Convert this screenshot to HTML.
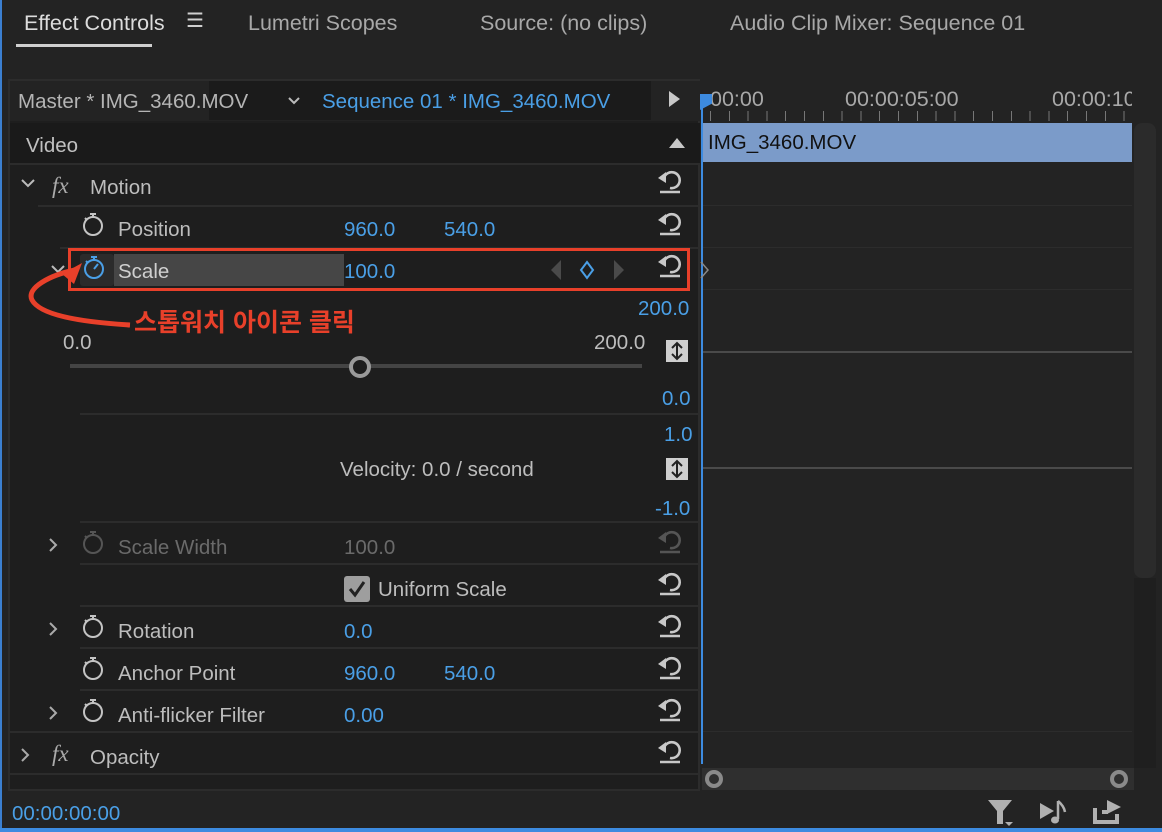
<!DOCTYPE html>
<html><head><meta charset="utf-8"><style>
*{margin:0;padding:0;box-sizing:border-box}
body{width:1162px;height:832px;background:#232323;font-family:"Liberation Sans","Noto Sans CJK KR",sans-serif;color:#bdbdbd;font-size:20.5px;position:relative;overflow:hidden}
.a{position:absolute;white-space:nowrap;line-height:1.15}
.b{color:#4a9fe6}
.ln{position:absolute;height:2px;background:#2c2c2c}
.rs{position:absolute;left:656px;width:28px;height:28px}
.sw{position:absolute;width:24px;height:26px}
.t{font-size:21.5px}
</style></head><body>
<div class="a" style="left:0;top:0;width:2px;height:832px;background:#3b7fd0"></div>
<div class="a" style="left:0;top:828px;width:1162px;height:4px;background:#3d8be0"></div>
<!-- tabs -->
<div class="a t" style="left:24px;top:11px;color:#dcdcdc">Effect Controls</div>
<div class="a" style="left:186px;top:10px;color:#cfcfcf;font-size:20px">☰</div>
<div class="a" style="left:16px;top:44px;width:136px;height:3px;background:#cfcfcf"></div>
<div class="a t" style="left:248px;top:11px;color:#a8a8a8">Lumetri Scopes</div>
<div class="a t" style="left:480px;top:11px;color:#a8a8a8">Source: (no clips)</div>
<div class="a t" style="left:730px;top:11px;color:#a8a8a8">Audio Clip Mixer: Sequence 01</div>
<!-- left panel -->
<div class="a" style="left:8px;top:79px;width:692px;height:712px;background:#1e1e1e;border:2px solid #2c2c2c"></div>
<div class="a" style="left:10px;top:81px;width:690px;height:40px;background:#232323"></div>
<div class="a" style="left:209px;top:81px;width:442px;height:39px;background:#1b1b1b"></div>
<div class="a" style="left:18px;top:90px;color:#b5b5b5">Master * IMG_3460.MOV</div>
<svg class="a" style="left:287px;top:96px" width="14" height="10"><path d="M2 2L7 7L12 2" fill="none" stroke="#bbb" stroke-width="2"/></svg>
<div class="a b" style="left:322px;top:90px">Sequence 01 * IMG_3460.MOV</div>
<svg class="a" style="left:668px;top:90px" width="14" height="18"><path d="M1 1L12 9L1 17Z" fill="#c8c8c8"/></svg>
<div class="a" style="left:10px;top:123px;width:690px;height:40px;background:#1a1a1a"></div>
<div class="a" style="left:26px;top:134px;color:#c0c0c0">Video</div>
<svg class="a" style="left:668px;top:137px" width="18" height="12"><path d="M1 11L9 1L17 11Z" fill="#c8c8c8"/></svg>
<div class="ln" style="left:10px;top:163px;width:690px"></div>
<div class="ln" style="left:38px;top:205px;width:662px"></div>
<div class="ln" style="left:60px;top:247px;width:640px"></div>
<div class="ln" style="left:80px;top:413px;width:620px"></div>
<div class="ln" style="left:80px;top:521px;width:620px"></div>
<div class="ln" style="left:80px;top:563px;width:620px"></div>
<div class="ln" style="left:80px;top:605px;width:620px"></div>
<div class="ln" style="left:80px;top:647px;width:620px"></div>
<div class="ln" style="left:80px;top:689px;width:620px"></div>
<div class="ln" style="left:10px;top:731px;width:690px"></div>
<div class="ln" style="left:10px;top:773px;width:690px"></div>
<!-- Motion -->
<svg class="a" style="left:20px;top:178px" width="16" height="12"><path d="M2 2L8 8L14 2" fill="none" stroke="#bbb" stroke-width="2"/></svg>
<div class="a" style="left:52px;top:173px;font-style:italic;font-size:23px;font-family:'Liberation Serif',serif;color:#aaa">fx</div>
<div class="a" style="left:90px;top:176px">Motion</div>
<svg width="0" height="0" style="position:absolute"><defs><g id="sw"><circle cx="11" cy="15" r="9" fill="none" stroke-width="2"/><path d="M8 3H14M11 3V6M3 7L5 9" fill="none" stroke-width="2"/></g>
<g id="rs"><path d="M8 11 A8 8 0 1 1 14 21" fill="none" stroke-width="2.6"/><path d="M2 11L10 5V16Z" stroke="none"/><path d="M4 25H24" stroke-width="2.4"/></g></defs></svg>
<svg class="sw" style="left:82px;top:211px" stroke="#c4c4c4"><use href="#sw"/></svg>
<div class="a" style="left:118px;top:218px">Position</div>
<div class="a b" style="left:344px;top:218px">960.0</div>
<div class="a b" style="left:444px;top:218px">540.0</div>
<!-- Scale row -->
<svg class="a" style="left:50px;top:264px" width="16" height="12"><path d="M2 2L8 8L14 2" fill="none" stroke="#bbb" stroke-width="2"/></svg>
<div class="a" style="left:80px;top:254px;width:34px;height:32px;background:#2b2b2b;border-radius:3px"></div>
<div class="a" style="left:114px;top:254px;width:230px;height:32px;background:#464646"></div>
<svg class="sw" style="left:83px;top:254px" stroke="#4a9fe6" fill="#4a9fe6"><use href="#sw"/><path d="M11 15L15 10" stroke-width="2"/></svg>
<div class="a" style="left:118px;top:260px;color:#cfcfcf">Scale</div>
<div class="a b" style="left:344px;top:260px">100.0</div>
<svg class="a" style="left:549px;top:259px" width="14" height="22"><path d="M12 1L2 11L12 21Z" fill="#4a4a4a"/></svg>
<svg class="a" style="left:579px;top:260px" width="16" height="20"><path d="M8 2L14 10L8 18L2 10Z" fill="none" stroke="#4a9fe6" stroke-width="2"/></svg>
<svg class="a" style="left:612px;top:259px" width="14" height="22"><path d="M2 1L12 11L2 21Z" fill="#4a4a4a"/></svg>
<div class="a" style="left:68px;top:248px;width:622px;height:43px;border:3px solid #e8402a"></div>
<svg class="a" style="left:20px;top:260px" width="120" height="80"><path d="M110 65 C60 62 20 55 12 40 C6 28 30 15 55 10" fill="none" stroke="#e8402a" stroke-width="5"/><path d="M62 3L42 14L54 24Z" fill="#e8402a"/></svg>
<div class="a" style="left:134px;top:309px;color:#e8402a;font-size:25px;font-weight:bold">스톱워치 아이콘 클릭</div>
<!-- graph -->
<div class="a b" style="left:638px;top:297px">200.0</div>
<div class="a" style="left:63px;top:331px;color:#bdbdbd">0.0</div>
<div class="a" style="left:594px;top:331px;color:#bdbdbd">200.0</div>
<div class="a" style="left:666px;top:340px;width:22px;height:22px;background:#cfcfcf"></div>
<svg class="a" style="left:666px;top:340px" width="22" height="22"><path d="M11 3V19M6 8L11 3L16 8M6 14L11 19L16 14" fill="none" stroke="#222" stroke-width="2"/></svg>
<div class="a" style="left:70px;top:364px;width:572px;height:4px;background:#444"></div>
<div class="a" style="left:349px;top:356px;width:22px;height:22px;border-radius:50%;border:4px solid #9a9a9a;background:#1e1e1e"></div>
<div class="a b" style="left:662px;top:387px">0.0</div>
<div class="a b" style="left:664px;top:423px">1.0</div>
<div class="a" style="left:340px;top:458px">Velocity: 0.0 / second</div>
<div class="a" style="left:666px;top:458px;width:22px;height:22px;background:#cfcfcf"></div>
<svg class="a" style="left:666px;top:458px" width="22" height="22"><path d="M11 3V19M6 8L11 3L16 8M6 14L11 19L16 14" fill="none" stroke="#222" stroke-width="2"/></svg>
<div class="a b" style="left:655px;top:497px">-1.0</div>
<!-- Scale width -->
<svg class="a" style="left:48px;top:537px" width="12" height="16"><path d="M2 2L8 8L2 14" fill="none" stroke="#aaa" stroke-width="2"/></svg>
<svg class="sw" style="left:82px;top:529px" stroke="#555"><use href="#sw"/></svg>
<div class="a" style="left:118px;top:536px;color:#6a6a6a">Scale Width</div>
<div class="a" style="left:344px;top:536px;color:#6a6a6a">100.0</div>
<div class="a" style="left:344px;top:576px;width:26px;height:26px;background:#9e9e9e;border-radius:3px"></div>
<svg class="a" style="left:346px;top:578px" width="22" height="22"><path d="M4 11L9 17L18 4" fill="none" stroke="#222" stroke-width="3"/></svg>
<div class="a" style="left:378px;top:578px">Uniform Scale</div>
<svg class="a" style="left:48px;top:621px" width="12" height="16"><path d="M2 2L8 8L2 14" fill="none" stroke="#aaa" stroke-width="2"/></svg>
<svg class="sw" style="left:82px;top:613px" stroke="#c4c4c4"><use href="#sw"/></svg>
<div class="a" style="left:118px;top:620px">Rotation</div>
<div class="a b" style="left:344px;top:620px">0.0</div>
<svg class="sw" style="left:82px;top:655px" stroke="#c4c4c4"><use href="#sw"/></svg>
<div class="a" style="left:118px;top:662px">Anchor Point</div>
<div class="a b" style="left:344px;top:662px">960.0</div>
<div class="a b" style="left:444px;top:662px">540.0</div>
<svg class="a" style="left:48px;top:705px" width="12" height="16"><path d="M2 2L8 8L2 14" fill="none" stroke="#aaa" stroke-width="2"/></svg>
<svg class="sw" style="left:82px;top:697px" stroke="#c4c4c4"><use href="#sw"/></svg>
<div class="a" style="left:118px;top:704px">Anti-flicker Filter</div>
<div class="a b" style="left:344px;top:704px">0.00</div>
<svg class="a" style="left:20px;top:747px" width="12" height="16"><path d="M2 2L8 8L2 14" fill="none" stroke="#aaa" stroke-width="2"/></svg>
<div class="a" style="left:52px;top:741px;font-style:italic;font-size:23px;font-family:'Liberation Serif',serif;color:#aaa">fx</div>
<div class="a" style="left:90px;top:746px">Opacity</div>
<svg class="rs" style="top:167px" fill="#c8c8c8" stroke="#c8c8c8"><use href="#rs"/></svg>
<svg class="rs" style="top:209px" fill="#c8c8c8" stroke="#c8c8c8"><use href="#rs"/></svg>
<svg class="rs" style="top:251px" fill="#c8c8c8" stroke="#c8c8c8"><use href="#rs"/></svg>
<svg class="rs" style="top:527px" fill="#555" stroke="#555"><use href="#rs"/></svg>
<svg class="rs" style="top:569px" fill="#c8c8c8" stroke="#c8c8c8"><use href="#rs"/></svg>
<svg class="rs" style="top:611px" fill="#c8c8c8" stroke="#c8c8c8"><use href="#rs"/></svg>
<svg class="rs" style="top:653px" fill="#c8c8c8" stroke="#c8c8c8"><use href="#rs"/></svg>
<svg class="rs" style="top:695px" fill="#c8c8c8" stroke="#c8c8c8"><use href="#rs"/></svg>
<svg class="rs" style="top:737px" fill="#c8c8c8" stroke="#c8c8c8"><use href="#rs"/></svg>
<div class="a b" style="left:12px;top:802px">00:00:00:00</div>
<!-- timeline -->
<div class="a" style="left:700px;top:79px;width:435px;height:44px;background:#232323"></div>
<div class="a t" style="left:710px;top:87px;color:#a8a8a8">00:00</div>
<div class="a t" style="left:845px;top:87px;color:#a8a8a8">00:00:05:00</div>
<div class="a t" style="left:1052px;top:87px;color:#a8a8a8;width:80px;overflow:hidden">00:00:10:00</div>
<div class="a" style="left:710px;top:111px;width:422px;height:10px;background:repeating-linear-gradient(90deg,#777 0 1px,transparent 1px 18.8px)"></div>
<div class="a" style="left:700px;top:94px;width:12px;height:16px;background:#3d8be0;clip-path:polygon(0 0,100% 0,100% 60%,0 100%)"></div>
<div class="a" style="left:702px;top:123px;width:430px;height:39px;background:#7b9bc9"></div>
<div class="a" style="left:708px;top:131px;color:#111">IMG_3460.MOV</div>
<div class="a" style="left:702px;top:205px;width:430px;height:1px;background:#2c2c2c"></div>
<div class="a" style="left:702px;top:247px;width:430px;height:1px;background:#2c2c2c"></div>
<div class="a" style="left:702px;top:289px;width:430px;height:1px;background:#2c2c2c"></div>
<div class="a" style="left:702px;top:351px;width:430px;height:2px;background:#4a4a4a"></div>
<div class="a" style="left:702px;top:467px;width:430px;height:2px;background:#4a4a4a"></div>
<div class="a" style="left:702px;top:731px;width:430px;height:1px;background:#2c2c2c"></div>
<div class="a" style="left:701px;top:94px;width:2px;height:670px;background:#3d8be0"></div>
<svg class="a" style="left:700px;top:260px" width="10" height="20"><path d="M1 2L8 10L1 18" fill="none" stroke="#888" stroke-width="1.5"/></svg>
<div class="a" style="left:1134px;top:123px;width:22px;height:455px;background:#2b2b2b;border-radius:8px"></div>
<div class="a" style="left:1134px;top:578px;width:22px;height:190px;background:#1f1f1f"></div>
<div class="a" style="left:702px;top:768px;width:432px;height:22px;background:#2f2f2f"></div>
<div class="a" style="left:705px;top:770px;width:18px;height:18px;border-radius:50%;border:4px solid #8a8a8a"></div>
<div class="a" style="left:1110px;top:770px;width:18px;height:18px;border-radius:50%;border:4px solid #8a8a8a"></div>
<svg class="a" style="left:986px;top:798px" width="30" height="30"><path d="M2 2H26L17 13V26H11V13Z" fill="#b0b0b0"/><path d="M19 24H27L23 28Z" fill="#b0b0b0"/></svg>
<svg class="a" style="left:1038px;top:798px" width="34" height="30"><path d="M2 5L16 13L2 21Z" fill="#b0b0b0"/><path d="M20 3V21" stroke="#b0b0b0" stroke-width="2.5"/><ellipse cx="17" cy="22" rx="4" ry="3.5" fill="#b0b0b0"/><path d="M20 3Q26 8 27 14" fill="none" stroke="#b0b0b0" stroke-width="2.5"/></svg>
<svg class="a" style="left:1092px;top:798px" width="32" height="28"><path d="M3 10V24H25V16" fill="none" stroke="#b0b0b0" stroke-width="4"/><path d="M15 2L29 9L15 16Z" fill="#b0b0b0"/><path d="M10 14H16" stroke="#b0b0b0" stroke-width="4"/></svg>
</body></html>
